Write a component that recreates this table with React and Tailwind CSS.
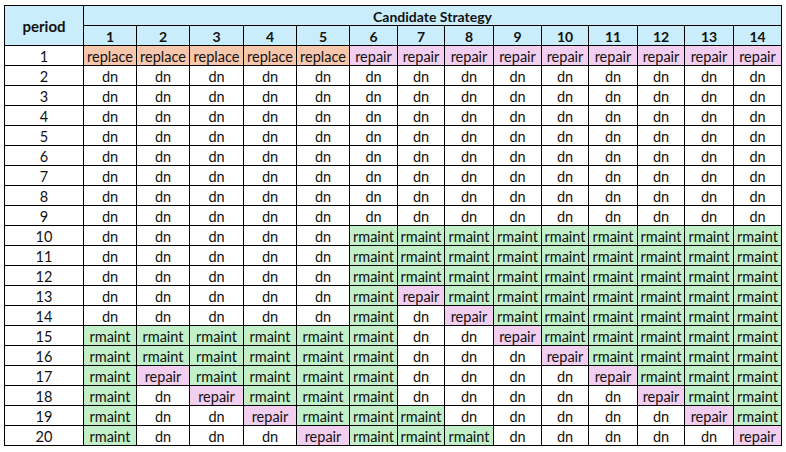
import React from "react";

const colW = [78, 52, 52, 53, 52, 52, 47, 46, 48, 47, 46, 48, 46, 48, 47];

const rows = [
  "PPPPPRRRRRRRRR",
  "DDDDDDDDDDDDDD",
  "DDDDDDDDDDDDDD",
  "DDDDDDDDDDDDDD",
  "DDDDDDDDDDDDDD",
  "DDDDDDDDDDDDDD",
  "DDDDDDDDDDDDDD",
  "DDDDDDDDDDDDDD",
  "DDDDDDDDDDDDDD",
  "DDDDDMMMMMMMMM",
  "DDDDDMMMMMMMMM",
  "DDDDDMMMMMMMMM",
  "DDDDDMRMMMMMMM",
  "DDDDDMDRMMMMMM",
  "MMMMMMDDRMMMMM",
  "MMMMMMDDDRMMMM",
  "MRMMMMDDDDRMMM",
  "MDRMMMDDDDDRMM",
  "MDDRMMMDDDDDRM",
  "MDDDRMMMDDDDDR",
];

const map = {
  P: { t: "replace", c: "bg-[#f7c7ac]" },
  R: { t: "repair", c: "bg-[#f2ceef]" },
  M: { t: "rmaint", c: "bg-[#c1f0c8]" },
  D: { t: "dn", c: "bg-white" },
};

export default function App() {
  return (
    <div
      className="w-[786px] h-[452px] bg-white pt-[5px] pl-[4px]"
      style={{ fontFamily: "Lato, 'Liberation Sans', sans-serif" }}
    >
      <div
        className="inline-grid gap-px bg-black p-px text-[14.5px] leading-none text-[#111]"
        style={{
          gridTemplateColumns: colW.map((w) => `${w}px`).join(" "),
          gridTemplateRows: "repeat(22, 19px)",
        }}
      >
        <div className="row-span-2 bg-[#caedfb] flex items-center justify-center font-bold text-[15px] pt-[2px]">
          period
        </div>
        <div className="col-span-14 bg-[#caedfb] flex items-center justify-center font-bold text-[14px] pt-[2px]">
          Candidate Strategy
        </div>
        {Array.from({ length: 14 }, (_, i) => (
          <div
            key={"h" + i}
            className="bg-[#caedfb] flex items-center justify-center font-bold text-[14px] pt-[2px]"
          >
            {i + 1}
          </div>
        ))}
        {rows.map((r, ri) => (
          <React.Fragment key={ri}>
            <div className="bg-white flex items-center justify-center pt-[3px]">{ri + 1}</div>
            {r.split("").map((ch, ci) => (
              <div
                key={ci}
                className={`${map[ch].c} flex items-center justify-center pt-[3px]`}
              >
                {map[ch].t}
              </div>
            ))}
          </React.Fragment>
        ))}
      </div>
    </div>
  );
}
